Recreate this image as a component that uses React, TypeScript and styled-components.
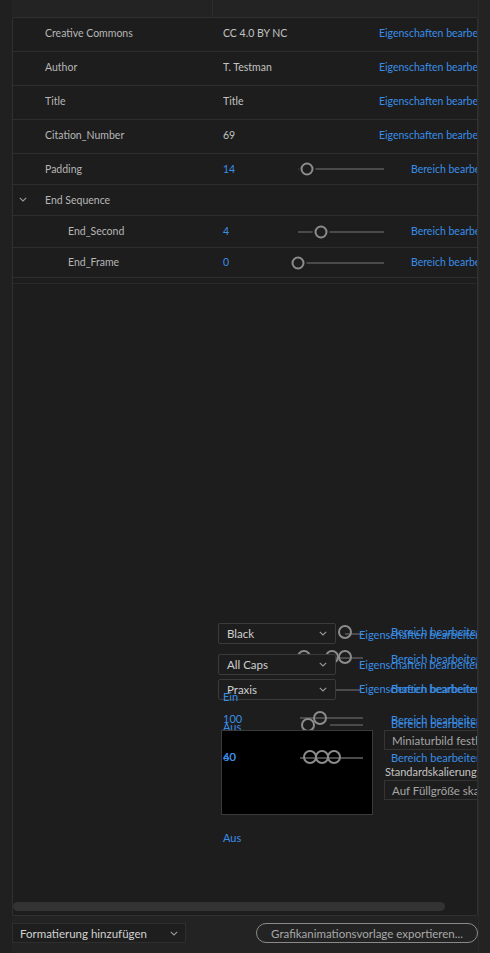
import styled, { createGlobalStyle } from "styled-components"

const GlobalStyle = createGlobalStyle`
    html, body {
        margin: 0;
        padding: 0;
        background: #232323;
    }
    body {
        font-family: Lato, "Open Sans", sans-serif;
        font-size: 10.5px;
        color: #b8b8b8;
    }
`

type Prop = {
    label: string
    value: string
    kind: "text" | "slider" | "group"
    pos?: number
    height: number
    indent?: boolean
}

const props: Prop[] = [
    { label: "Creative Commons", value: "CC 4.0 BY NC", kind: "text", height: 34 },
    { label: "Author", value: "T. Testman", kind: "text", height: 34 },
    { label: "Title", value: "Title", kind: "text", height: 34 },
    { label: "Citation_Number", value: "69", kind: "text", height: 34 },
    { label: "Padding", value: "14", kind: "slider", pos: 0.105, height: 31 },
    { label: "End Sequence", value: "", kind: "group", height: 31 },
    { label: "End_Second", value: "4", kind: "slider", pos: 0.27, height: 32, indent: true },
    { label: "End_Frame", value: "0", kind: "slider", pos: 0, height: 30, indent: true },
]

const Chevron = ({ color = "#9a9a9a" }: { color?: string }) => (
    <svg width="8" height="5" viewBox="0 0 8 5">
        <path d="M0.8 0.8 L4 4 L7.2 0.8" fill="none" stroke={color} strokeWidth="1.1" />
    </svg>
)

const Slider = ({ pos }: { pos: number }) => (
    <SliderCell>
        <Track>
            <Knob style={{ left: `${pos * 100}%` }} />
        </Track>
    </SliderCell>
)

const PropRow = ({ item }: { item: Prop }) => {
    if (item.kind === "group") {
        return (
            <GroupRow $h={item.height}>
                <Toggle><Chevron /></Toggle>
                <Label>{item.label}</Label>
            </GroupRow>
        )
    }
    if (item.kind === "slider") {
        return (
            <SliderRow $h={item.height}>
                <Label $indent={item.indent}>{item.label}</Label>
                <Number>{item.value}</Number>
                <Slider pos={item.pos ?? 0} />
                <Link>Bereich bearbeiten</Link>
            </SliderRow>
        )
    }
    return (
        <Row $h={item.height}>
            <Label>{item.label}</Label>
            <Value>{item.value}</Value>
            <Link>Eigenschaften bearbeiten</Link>
        </Row>
    )
}

// the stacked controls below are drawn over each other, so they sit on a free canvas
// whose origin is the panel's inner corner after the divider (page x 13, y 284)
const OX = 13
const OY = 284

const MiniKnob = ({ x, y }: { x: number, y: number }) => (
    <FloatKnob style={{ left: x - OX - 7, top: y - OY - 7 }} />
)

const Line = ({ x, y, w }: { x: number, y: number, w: number }) => (
    <FloatLine style={{ left: x - OX, top: y - OY, width: w }} />
)

const Float = ({ x, y, children }: { x: number, y: number, children: React.ReactNode }) => (
    <FloatText style={{ left: x - OX, top: y - OY - 7 }}>{children}</FloatText>
)

const App = () => {
    return (
        <>
            <GlobalStyle />
            <Frame>
                <SideStrip />
                <Main>
                    <TopBar>
                        <TopCell />
                        <TopCell $grow />
                    </TopBar>
                    <Panel>
                        <List>
                            {props.map(p => <PropRow key={p.label} item={p} />)}
                        </List>
                        <Divider />
                        <Canvas>
                            <Line x={345} y={633} w={18} />
                            <Line x={296} y={657} w={67} />
                            <Line x={336} y={689} w={24} />
                            <Line x={300} y={717} w={63} />
                            <Line x={330} y={724} w={33} />

                            <MiniKnob x={345} y={632} />
                            <MiniKnob x={304} y={657} />
                            <MiniKnob x={332} y={657} />
                            <MiniKnob x={345} y={657} />
                            <MiniKnob x={320} y={718} />
                            <MiniKnob x={308} y={725} />

                            <Float x={359} y={635}>Eigenschaften bearbeiten</Float>
                            <Float x={391} y={632}>Bereich bearbeiten</Float>
                            <Float x={391} y={659}>Bereich bearbeiten</Float>
                            <Float x={359} y={665}>Eigenschaften bearbeiten</Float>
                            <Float x={359} y={689}>Eigenschaften bearbeiten</Float>
                            <Float x={391} y={689}>Bereich bearbeiten</Float>
                            <Float x={391} y={720}>Bereich bearbeiten</Float>
                            <Float x={391} y={724}>Bereich bearbeiten</Float>
                            <Float x={391} y={758}>Bereich bearbeiten</Float>

                            <Float x={223} y={719}>100</Float>
                            <Float x={223} y={727}>Aus</Float>

                            <Dropdown style={{ left: 218 - OX, top: 623 - OY }}>
                                <span>Black</span><Chevron />
                            </Dropdown>
                            <Dropdown style={{ left: 218 - OX, top: 654 - OY }}>
                                <span>All Caps</span><Chevron />
                            </Dropdown>
                            <Dropdown style={{ left: 218 - OX, top: 679 - OY }}>
                                <span>Praxis</span><Chevron />
                            </Dropdown>
                            <Float x={223} y={697}>Ein</Float>

                            <Preview style={{ left: 221 - OX, top: 730 - OY }} />
                            <Line x={300} y={757} w={63} />
                            <MiniKnob x={310} y={757} />
                            <MiniKnob x={322} y={757} />
                            <MiniKnob x={334} y={757} />
                            <Float x={223} y={757}>60</Float>
                            <Float x={223} y={757}>40</Float>

                            <GhostButton style={{ left: 384 - OX, top: 730 - OY }}>
                                Miniaturbild festlegen
                            </GhostButton>
                            <Caption style={{ left: 385 - OX, top: 772 - OY - 7 }}>
                                Standardskalierung
                            </Caption>
                            <GhostButton style={{ left: 384 - OX, top: 780 - OY }}>
                                Auf Füllgröße skalieren
                            </GhostButton>

                            <Float x={223} y={838}>Aus</Float>
                        </Canvas>
                        <HScroll>
                            <HThumb />
                        </HScroll>
                    </Panel>
                    <Footer>
                        <FooterSelect>
                            <span>Formatierung hinzufügen</span>
                            <Chevron />
                        </FooterSelect>
                        <ExportButton>Grafikanimationsvorlage exportieren...</ExportButton>
                    </Footer>
                </Main>
                <ScrollStrip />
            </Frame>
        </>
    )
}

export default App

const Frame = styled.div`
    display: flex;
    width: 490px;
    height: 953px;
    overflow: hidden;
`

const SideStrip = styled.div`
    width: 12px;
    flex-shrink: 0;
    background: #202020;
`

const ScrollStrip = styled.div`
    width: 12px;
    flex-shrink: 0;
    background: #232323;
    border-left: 1px solid #2a2a2a;
    box-sizing: border-box;
`

const Main = styled.div`
    flex: 1;
    display: flex;
    flex-direction: column;
    min-width: 0;
`

const TopBar = styled.div`
    height: 17px;
    display: flex;
    flex-shrink: 0;
`

const TopCell = styled.div<{ $grow?: boolean }>`
    width: ${p => p.$grow ? "auto" : "200px"};
    flex: ${p => p.$grow ? 1 : "none"};
    border-right: ${p => p.$grow ? "none" : "1px solid #2c2c2c"};
`

const Panel = styled.div`
    height: 899px;
    box-sizing: border-box;
    border: 1px solid #303030;
    border-radius: 2px;
    background: #1d1d1d;
    display: flex;
    flex-direction: column;
    overflow: hidden;
`

const List = styled.div`
    display: flex;
    flex-direction: column;
`

const Row = styled.div<{ $h: number }>`
    height: ${p => p.$h}px;
    box-sizing: border-box;
    border-bottom: 1px solid #2e2e2e;
    display: grid;
    grid-template-columns: 178px 156px 200px;
    align-items: center;
    padding-left: 32px;
    padding-bottom: 3px;
    white-space: nowrap;
`

const SliderRow = styled(Row)`
    grid-template-columns: 178px 64px 124px 200px;
    padding-bottom: 1px;
`

const GroupRow = styled(Row)`
    grid-template-columns: 32px 1fr;
    padding-left: 0;
    padding-bottom: 1px;
`

const Toggle = styled.div`
    display: flex;
    justify-content: center;
    padding-right: 12px;
    padding-bottom: 1px;
`

const Label = styled.span<{ $indent?: boolean }>`
    color: #b6b6b6;
    padding-left: ${p => p.$indent ? "23px" : "0"};
`

const Value = styled.span`
    color: #c2c2c2;
    overflow: hidden;
`

const Number = styled.span`
    color: #3a8ee6;
`

const Link = styled.span`
    color: #3a8ee6;
`

const SliderCell = styled.div`
    display: flex;
    align-items: center;
    padding-left: 11px;
    padding-right: 27px;
    padding-top: 1px;
`

const Track = styled.div`
    position: relative;
    flex: 1;
    height: 2px;
    background: #4a4a4a;
`

const Knob = styled.span`
    position: absolute;
    top: 50%;
    width: 9px;
    height: 9px;
    transform: translate(-50%, -50%);
    border: 2px solid #8c8c8c;
    border-radius: 50%;
    background: #1d1d1d;
    box-shadow: 0 0 0 2px #1d1d1d;
`

const Divider = styled.div`
    margin-top: 5px;
    height: 1px;
    background: #2a2a2a;
`

const Canvas = styled.div`
    position: relative;
    flex: 1;
`

const FloatLine = styled.span`
    position: absolute;
    height: 2px;
    background: #4a4a4a;
`

const FloatKnob = styled.span`
    position: absolute;
    width: 10px;
    height: 10px;
    border: 2px solid #8c8c8c;
    border-radius: 50%;
`

const FloatText = styled.span`
    position: absolute;
    color: #3a8ee6;
    line-height: 14px;
    font-size: 11px;
    white-space: nowrap;
`

const Dropdown = styled.div`
    position: absolute;
    width: 118px;
    height: 21px;
    box-sizing: border-box;
    padding: 0 8px;
    display: flex;
    align-items: center;
    justify-content: space-between;
    background: #1d1d1d;
    border: 1px solid #3a3a3a;
    border-radius: 2px;
    color: #cfcfcf;
    font-size: 11.5px;
`

const Preview = styled.div`
    position: absolute;
    width: 152px;
    height: 85px;
    box-sizing: border-box;
    background: #000;
    border: 1px solid #3a3a3a;
`

const GhostButton = styled.div`
    position: absolute;
    width: 140px;
    height: 20px;
    box-sizing: border-box;
    padding-left: 7px;
    display: flex;
    align-items: center;
    border: 1px solid #343434;
    color: #a5a5a5;
    font-size: 11.5px;
    white-space: nowrap;
`

const Caption = styled.span`
    position: absolute;
    color: #c4c4c4;
    line-height: 14px;
    font-size: 11px;
    white-space: nowrap;
`

const HScroll = styled.div`
    height: 11px;
    padding: 0 0 2px 0;
    flex-shrink: 0;
`

const HThumb = styled.div`
    width: 432px;
    height: 9px;
    border-radius: 5px;
    background: #333;
`

const Footer = styled.div`
    display: flex;
    justify-content: space-between;
    align-items: center;
    padding-top: 7px;
`

const FooterSelect = styled.div`
    width: 174px;
    height: 20px;
    box-sizing: border-box;
    padding: 0 7px;
    display: flex;
    align-items: center;
    justify-content: space-between;
    background: #1e1e1e;
    border: 1px solid #2e2e2e;
    color: #d2d2d2;
    font-size: 11.5px;
`

const ExportButton = styled.div`
    width: 222px;
    height: 20px;
    box-sizing: border-box;
    border: 1px solid #8a8a8a;
    border-radius: 10px;
    display: flex;
    align-items: center;
    justify-content: center;
    color: #a8a8a8;
    font-size: 11.5px;
`
